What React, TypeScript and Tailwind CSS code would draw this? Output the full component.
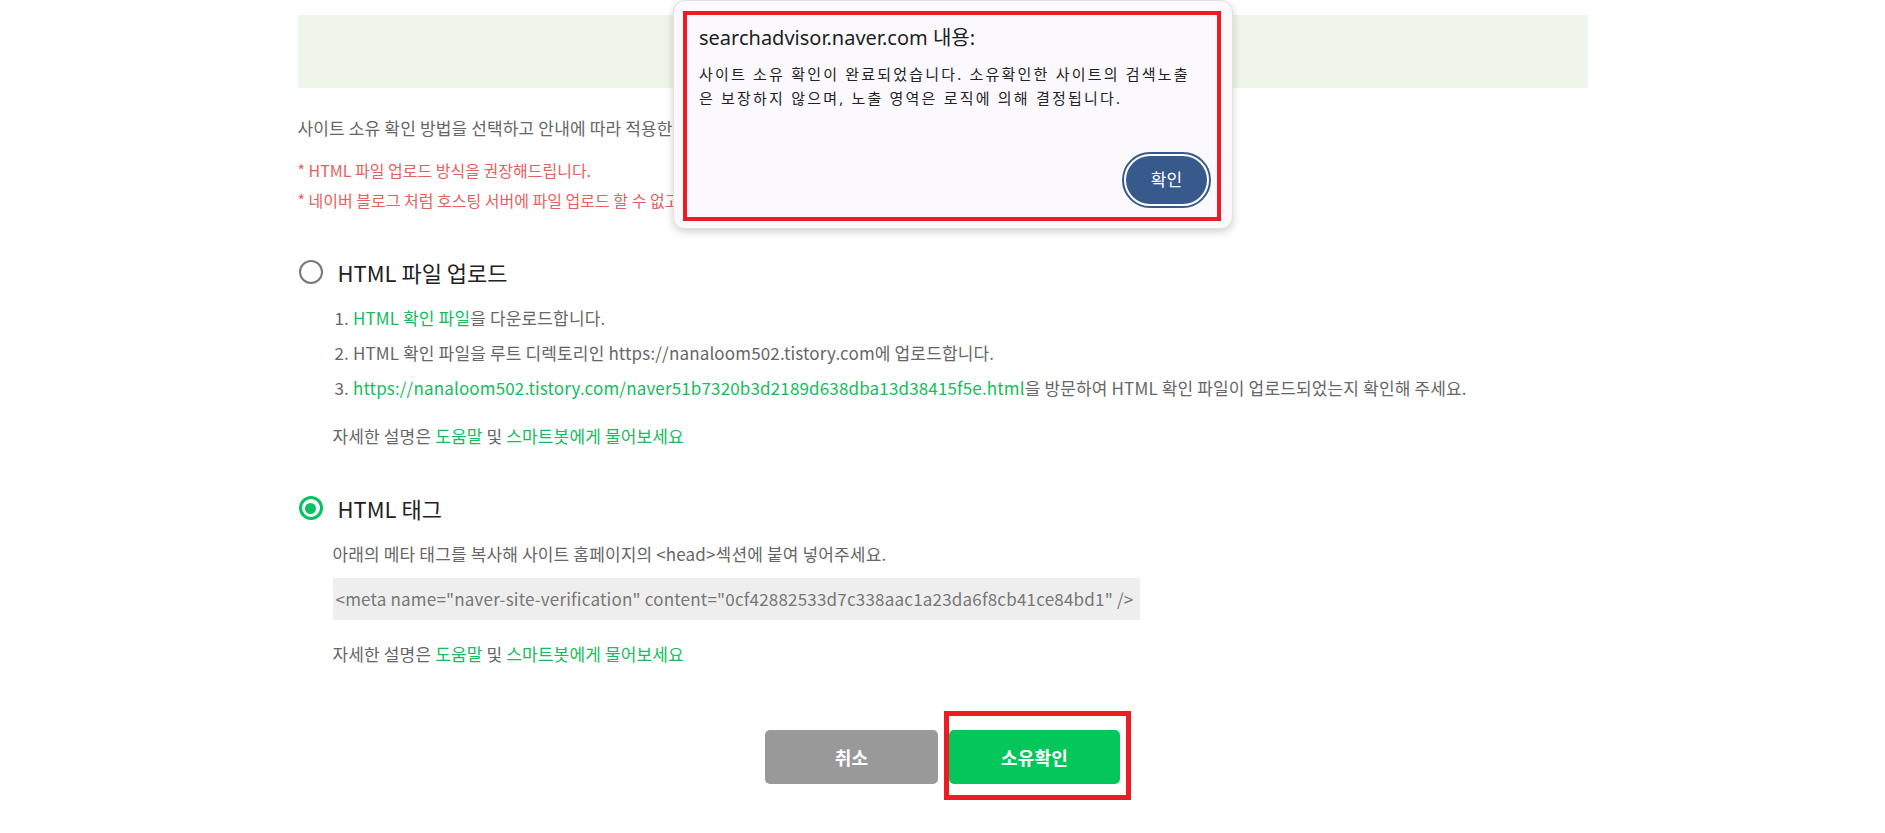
import { FC, ReactNode } from "react";

const FONT = { fontFamily: '"Noto Sans CJK KR", "Noto Sans", sans-serif' };
const DIALOG_FONT = { fontFamily: '"Noto Sans", "Noto Sans CJK KR", sans-serif' };

const Link: FC<{ children: ReactNode }> = ({ children }) => (
    <span className="text-[#13bd5c]">{children}</span>
);

const Radio: FC<{ checked?: boolean }> = ({ checked }) =>
    checked ? (
        <span className="flex h-[24px] w-[24px] items-center justify-center rounded-full border-[3px] border-[#08c160]">
            <span className="h-[11px] w-[11px] rounded-full bg-[#08c160]" />
        </span>
    ) : (
        <span className="h-[24px] w-[24px] rounded-full border-2 border-[#777777]" />
    );

const HelpLine = () => (
    <p className="leading-[24px]">
        자세한 설명은 <Link>도움말</Link> 및 <Link>스마트봇에게 물어보세요</Link>
    </p>
);

const AlertDialog = () => (
    <div
        className="absolute left-[673px] top-0 h-[229px] w-[560px] rounded-[12px] border border-[#e2e2e2] bg-[#fbf9fe] pl-[25px] pr-[21px] pt-[23px] shadow-[0_3px_8px_rgba(0,0,0,0.18)]"
        style={DIALOG_FONT}
    >
        <div className="absolute left-[9px] top-[10px] h-[210px] w-[538px] border-4 border-[#ed1c24]" />
        <h2 className="text-[20px] leading-[28px] text-[#1d1d1d]">searchadvisor.naver.com 내용:</h2>
        <p className="mt-[10px] whitespace-nowrap text-[15px] leading-[24px] tracking-[2.2px] text-[#222]">
            사이트 소유 확인이 완료되었습니다. 소유확인한 사이트의 검색노출
            <br />
            은 보장하지 않으며, 노출 영역은 로직에 의해 결정됩니다.
        </p>
        <div className="mt-[42px] flex justify-end">
            <button
                type="button"
                className="h-[56px] w-[89px] rounded-full border-2 border-[#37598b] bg-white p-[2px]"
            >
                <span className="flex h-full w-full items-center justify-center rounded-full bg-[#37598b] text-[17px] text-white">
                    확인
                </span>
            </button>
        </div>
    </div>
);

export default function App() {
    return (
        <div className="relative min-h-[833px] overflow-hidden bg-white" style={FONT}>
            <div className="mx-auto w-[1290px] pt-[15px] text-[17px] tracking-[0.15px] text-[#666666]">
                <div className="h-[73px] bg-[#f0f5e9]" />

                <p className="mt-[28px] leading-[24px]">
                    사이트 소유 확인 방법을 선택하고 안내에 따라 적용한 후 소유확인 버튼을 눌러주세요.
                </p>
                <div className="mt-[15px] text-[16px] leading-[30px] tracking-normal text-[#e8605e]">
                    <p>* HTML 파일 업로드 방식을 권장해드립니다.</p>
                    <p>* 네이버 블로그 처럼 호스팅 서버에 파일 업로드 할 수 없고, HTML 태그를 삽입할 수 있는 경우 HTML 태그 방식을 사용해주세요.</p>
                </div>

                <section className="mt-[42px]">
                    <label className="flex h-[30px] items-center gap-[15px] pl-[1px]">
                        <Radio />
                        <span className="text-[22px] tracking-normal text-[#222222]">HTML 파일 업로드</span>
                    </label>
                    <ol className="mt-[13px] pl-[37px] leading-[35px]">
                        <li>
                            1. <Link>HTML 확인 파일</Link>을 다운로드합니다.
                        </li>
                        <li>2. HTML 확인 파일을 루트 디렉토리인 https://nanaloom502.tistory.com에 업로드합니다.</li>
                        <li>
                            3. <Link>https://nanaloom502.tistory.com/naver51b7320b3d2189d638dba13d38415f5e.html</Link>을
                            방문하여 HTML 확인 파일이 업로드되었는지 확인해 주세요.
                        </li>
                    </ol>
                    <div className="mt-[19px] pl-[35px]">
                        <HelpLine />
                    </div>
                </section>

                <section className="mt-[45px]">
                    <label className="flex h-[30px] items-center gap-[15px] pl-[1px]">
                        <Radio checked />
                        <span className="text-[22px] tracking-normal text-[#222222]">HTML 태그</span>
                    </label>
                    <div className="pl-[35px]">
                        <p className="mt-[19px] leading-[24px]">
                            아래의 메타 태그를 복사해 사이트 홈페이지의 &lt;head&gt;섹션에 붙여 넣어주세요.
                        </p>
                        <div className="mt-[12px] flex h-[42px] w-[807px] items-center bg-[#eeeeee] pl-[3px] tracking-[0.2px] text-[#777777]">
                            &lt;meta name="naver-site-verification" content="0cf42882533d7c338aac1a23da6f8cb41ce84bd1" /&gt;
                        </div>
                        <div className="mt-[22px]">
                            <HelpLine />
                        </div>
                    </div>
                </section>

                <div className="mt-[64px] flex justify-center gap-[11px] pb-[49px]">
                    <button
                        type="button"
                        className="h-[54px] w-[173px] rounded-[5px] bg-[#999999] text-[18px] font-bold text-white"
                    >
                        취소
                    </button>
                    <div className="relative">
                        <button
                            type="button"
                            className="h-[54px] w-[171px] rounded-[5px] bg-[#03c75a] text-[18px] font-bold text-white"
                        >
                            소유확인
                        </button>
                        <div className="absolute -bottom-[16px] -left-[5px] -right-[11px] -top-[19px] border-[5px] border-[#ed1c24]" />
                    </div>
                </div>
            </div>

            <AlertDialog />
        </div>
    );
}
